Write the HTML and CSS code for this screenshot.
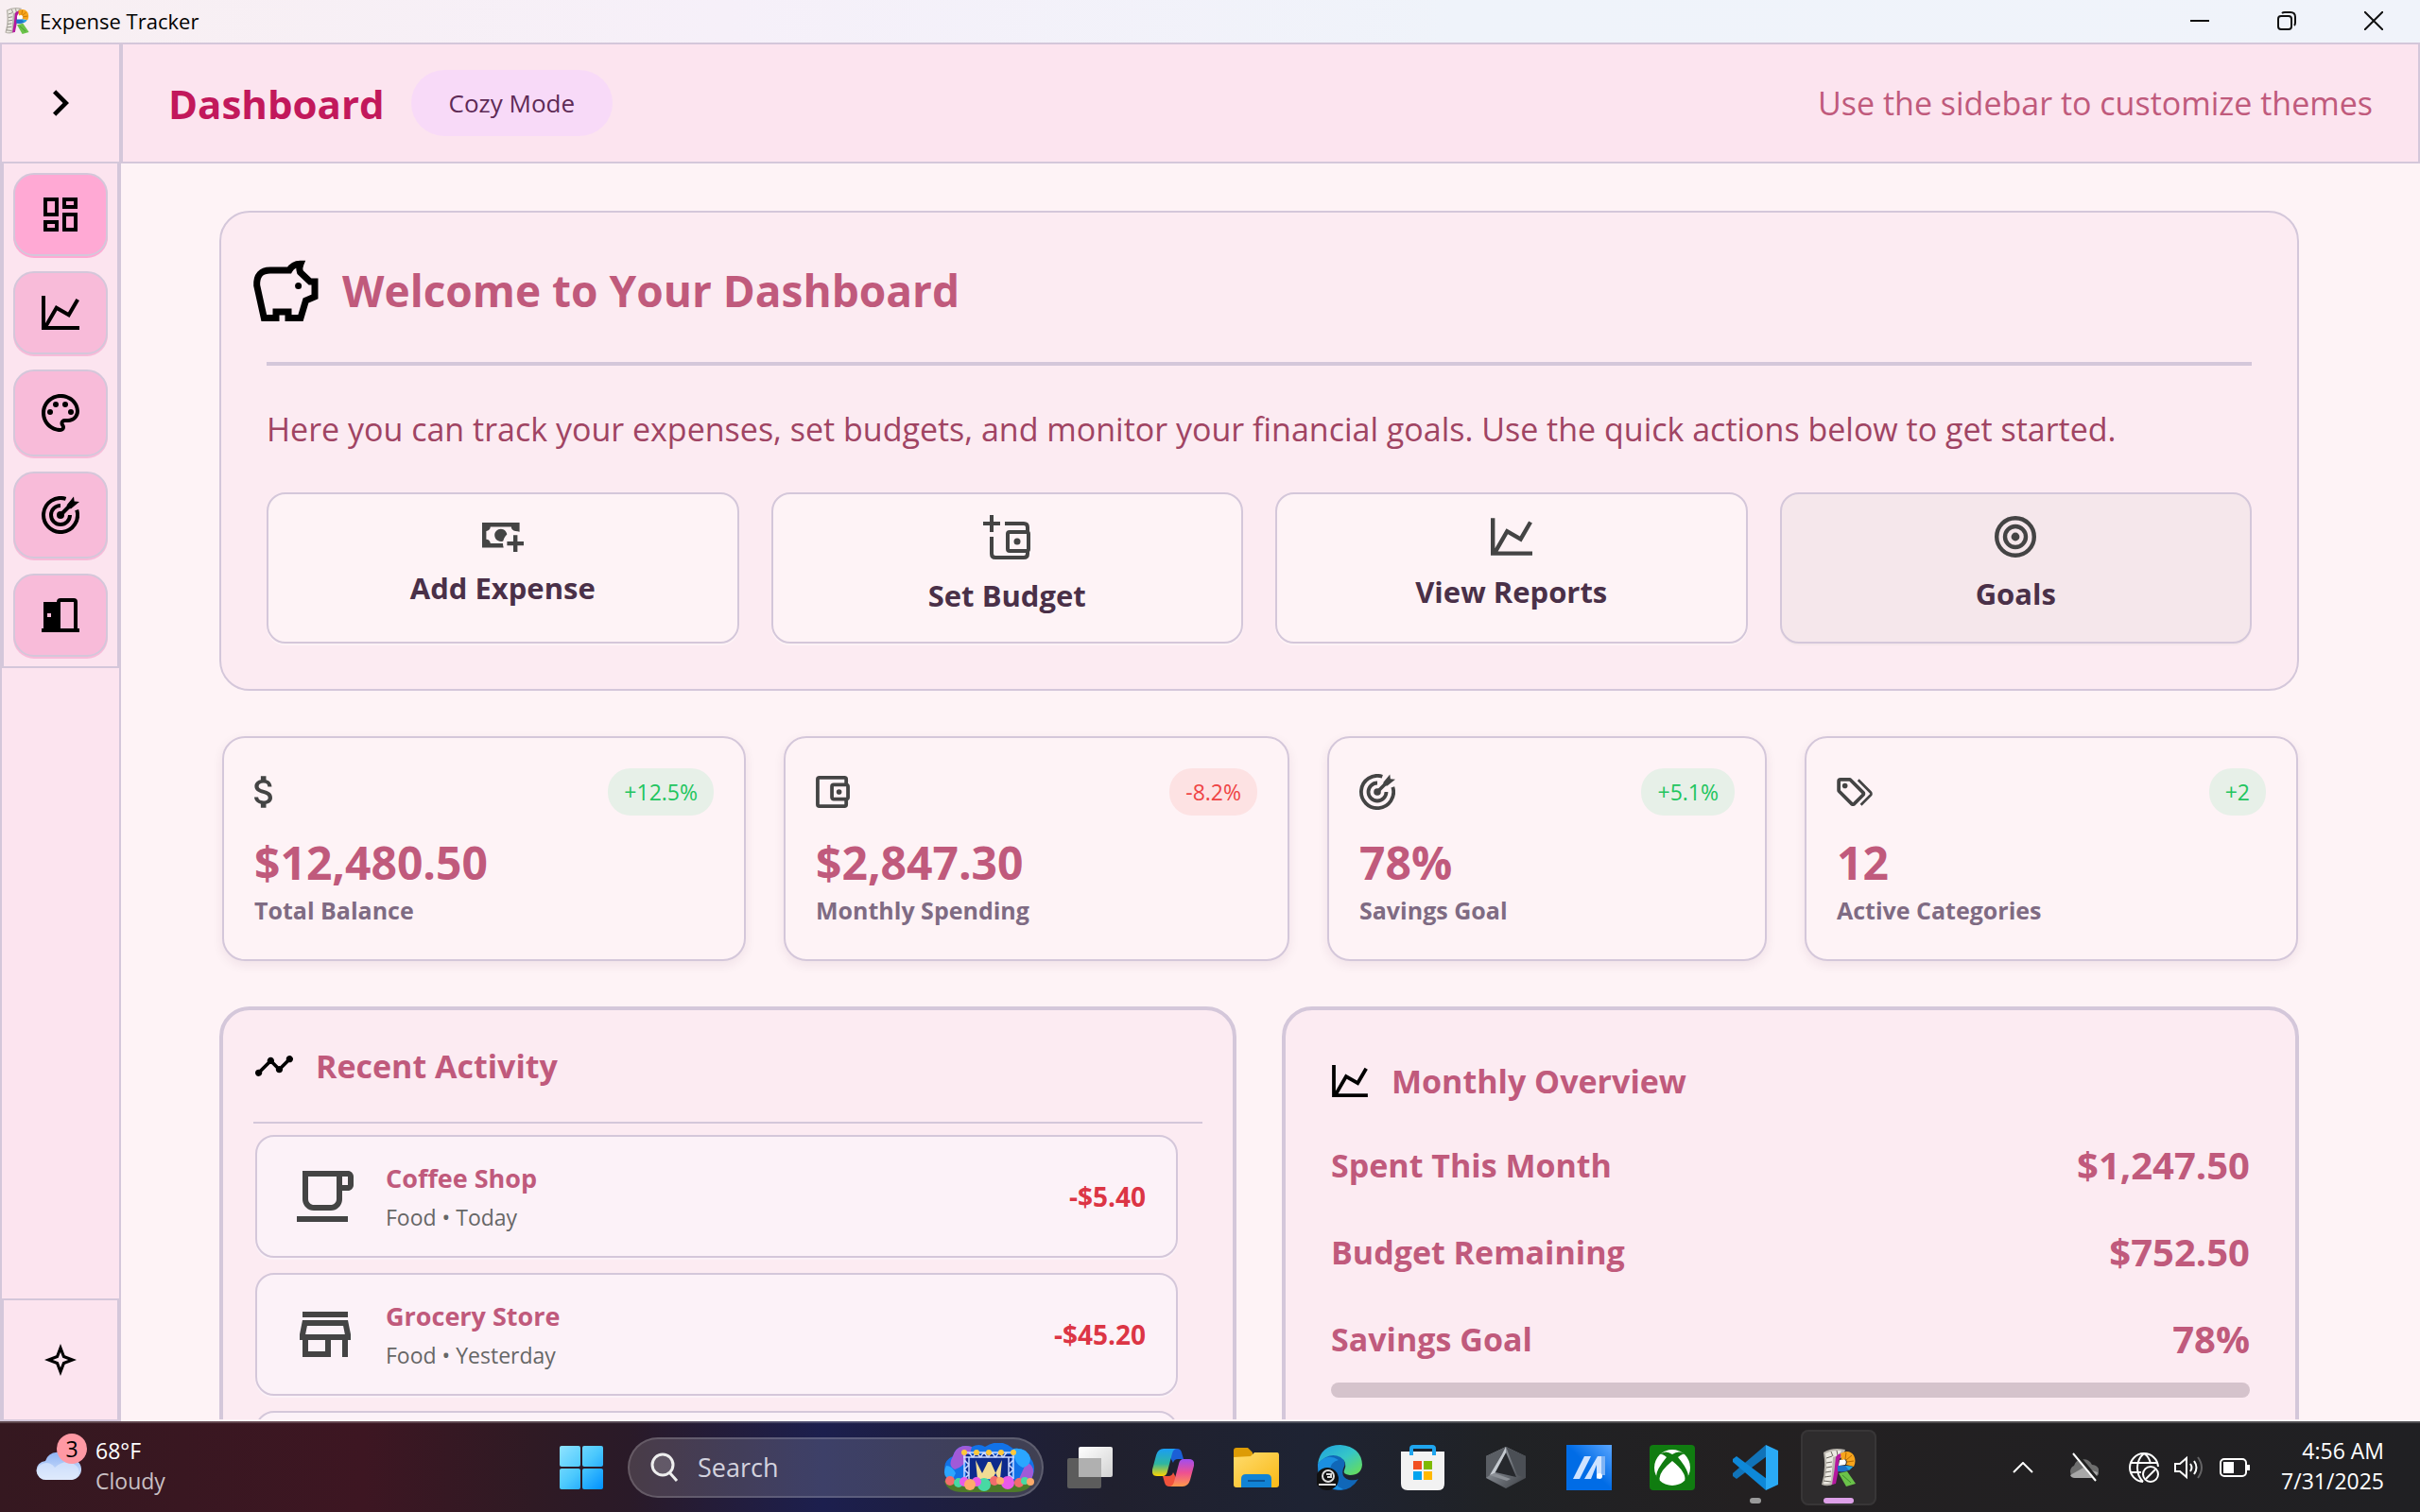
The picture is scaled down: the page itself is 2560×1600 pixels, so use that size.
FILE: index.html
```
<!DOCTYPE html>
<html lang="en">
<head>
<meta charset="utf-8">
<meta name="viewport" content="width=device-width, initial-scale=1">
<title>Expense Tracker</title>
<link rel="stylesheet" href="styles.css">
</head>
<body>
<svg class="defs" aria-hidden="true">
  <defs>
    <linearGradient id="g-win" gradientUnits="userSpaceOnUse" x1="0" y1="0" x2="46" y2="46"><stop offset="0" stop-color="#8fe3ff"/><stop offset=".5" stop-color="#4cc9fd"/><stop offset="1" stop-color="#0091ff"/></linearGradient>
    <linearGradient id="g-cloud" x1="0" y1="0" x2="0" y2="1"><stop offset="0" stop-color="#8fb4f4"/><stop offset="1" stop-color="#d8e6fc"/></linearGradient>
    <linearGradient id="g-copa" x1="0" y1="0" x2="0" y2="1"><stop offset="0" stop-color="#1a9df5"/><stop offset=".55" stop-color="#2fb6a0"/><stop offset="1" stop-color="#ffd400"/></linearGradient>
    <linearGradient id="g-copb" x1="0" y1="0" x2="0" y2="1"><stop offset="0" stop-color="#a04df0"/><stop offset=".5" stop-color="#ee5091"/><stop offset="1" stop-color="#ff9a4a"/></linearGradient>
    <linearGradient id="g-fold" x1="0" y1="0" x2="1" y2="1"><stop offset="0" stop-color="#ffdc6e"/><stop offset="1" stop-color="#f9b916"/></linearGradient>
    <linearGradient id="g-edge" x1="0" y1="0" x2="1" y2="1"><stop offset="0" stop-color="#1f9fe0"/><stop offset=".5" stop-color="#35c6c8"/><stop offset="1" stop-color="#6ee04a"/></linearGradient>
    <linearGradient id="g-hex" x1="0" y1="0" x2="1" y2="1"><stop offset="0" stop-color="#aab0b8"/><stop offset="1" stop-color="#3a3d42"/></linearGradient>
    <linearGradient id="g-asus" x1="0" y1="1" x2="1" y2="0"><stop offset=".5" stop-color="#006ce6"/><stop offset="1" stop-color="#5aa6ff"/></linearGradient>
    <linearGradient id="g-view" x1="0" y1="0" x2="1" y2="1"><stop offset="0" stop-color="#ffffff"/><stop offset="1" stop-color="#d2d2d2"/></linearGradient>
    <symbol id="i-chart" viewBox="2 3 20 18"><path d="M16 11.78l4.24-7.33 1.73 1-5.23 9.05-6.51-3.75L5.46 19H22v2H2V3h2v14.54L9.5 8z"/></symbol>
    <symbol id="i-target" viewBox="2 2 20 20">
      <path fill="none" stroke="currentColor" stroke-width="2" d="M14.8 3.45A9 9 0 1 0 20.6 9.3M12 7a5 5 0 1 0 5 5"/>
      <circle cx="12" cy="12" r="2"/><path fill="none" stroke="currentColor" stroke-width="2" d="M12 12l5-5"/>
      <path d="M15.4 6.6L19 2.2l.3 2.5 2.7.3-4.4 3.6h-2.2z"/>
    </symbol>
    <symbol id="i-wallet" viewBox="3 3 19 18"><path d="M5 3a2 2 0 0 0-2 2v14a2 2 0 0 0 2 2h14a2 2 0 0 0 2-2v-2.28c.59-.35 1-.98 1-1.72V9c0-.74-.41-1.37-1-1.72V5a2 2 0 0 0-2-2zm0 2h14v2h-6a2 2 0 0 0-2 2v6c0 1.1.9 2 2 2h6v2H5zm8 4h7v6h-7zm3 1.5a1.5 1.5 0 1 0 0 3 1.5 1.5 0 0 0 0-3z"/></symbol>
    <symbol id="i-logo" viewBox="0 0 38 40">
      <path fill="#b8b4ac" d="M3 4Q12-2 26 1l-3 8-6 2-3 26q-6 4-13 1Q6 22 3 4z"/>
      <path fill="#ece9e2" d="M5 5Q13 1 22 2l-3 5-6 2-2 27q-4 2-8 1Q8 22 5 5z"/>
      <path stroke="#6b675f" stroke-width="1" d="M6 10l6-2M6 15l6-1M6 20l6-1M5 25l6-1M4 30l7-1M3 34l8 1M11 3l2 5M17 2l1 5" fill="none"/>
      <path fill="#b5179e" d="M16 9q2-4 7-4l-4 8v9l-3 15-4 1q3-15 4-29z"/>
      <path fill="#ffffff" d="M20 12l5-1q3 2 1 6l-7 1z"/>
      <path fill="#f7a51c" d="M21 5q9-5 14 2 3 6 0 12l-8-2q2-4-1-6l-4 1z"/>
      <path stroke="#b96a00" fill="none" d="M27 4l-1 7M33 7l-6 5M35 13l-7 1"/>
      <path fill="#1f72c9" d="M18 18l9 0 7 1q-5 7-16 5z"/><path fill="#25a7e0" d="M26 18l8 1-4 4z"/>
      <path fill="#6bc24a" d="M19 26l9-2 9 13-10 3z"/><path fill="none" stroke="#3c8f2a" d="M23 28l9 8"/>
    </symbol>
  </defs>
</svg>

<header class="titlebar">
  <svg class="titlebar-logo"><use href="#i-logo"/></svg>
  <span class="titlebar-name">Expense Tracker</span>
  <div class="window-controls">
    <button type="button" aria-label="Minimize"><svg width="20" height="20" viewBox="0 0 20 20"><path d="M0 10h20"/></svg></button>
    <button type="button" aria-label="Restore"><svg width="20" height="20" viewBox="0 0 20 20"><rect x="1" y="5" width="14" height="14" rx="3"/><path d="M5 2q1-1 3-1h6q5 0 5 5v6q0 2-1 3"/></svg></button>
    <button type="button" aria-label="Close"><svg width="20" height="20" viewBox="0 0 20 20"><path d="M0 0l20 20M20 0L0 20"/></svg></button>
  </div>
</header>

<div class="app">
  <aside class="sidebar">
    <button type="button" class="sidebar-toggle" aria-label="Expand sidebar"><svg width="17" height="28" viewBox="8.59 6 7.41 12"><path d="M8.59 16.58L13.17 12 8.59 7.41 10 6l6 6-6 6z"/></svg></button>
    <nav class="sidebar-nav">
      <button type="button" class="nav-button active" aria-label="Dashboard"><svg width="40" height="36" viewBox="2 3 20 18"><path d="M19 5v2h-4V5h4M9 5v6H5V5h4m10 8v6h-4v-6h4M9 17v2H5v-2h4M21 3h-8v6h8V3zM11 3H3v10h8V3zm10 8h-8v10h8V11zm-10 4H3v6h8v-6z"/></svg></button>
      <button type="button" class="nav-button" aria-label="Reports"><svg width="40" height="36"><use href="#i-chart"/></svg></button>
      <button type="button" class="nav-button" aria-label="Themes"><svg width="40" height="40" viewBox="2 2 20 20"><path d="M12 22C6.49 22 2 17.51 2 12S6.49 2 12 2s10 4.04 10 9c0 3.31-2.69 6-6 6h-1.77c-.28 0-.5.22-.5.5 0 .12.05.23.13.33.41.47.64 1.06.64 1.67A2.5 2.5 0 0 1 12 22zm0-18c-4.41 0-8 3.59-8 8s3.59 8 8 8c.28 0 .5-.22.5-.5a.54.54 0 0 0-.14-.35c-.41-.46-.63-1.05-.63-1.65a2.5 2.5 0 0 1 2.5-2.5H16c2.21 0 4-1.79 4-4 0-3.86-3.59-7-8-7z"/><circle cx="6.5" cy="11.5" r="1.5"/><circle cx="9.5" cy="7.5" r="1.5"/><circle cx="14.5" cy="7.5" r="1.5"/><circle cx="17.5" cy="11.5" r="1.5"/></svg></button>
      <button type="button" class="nav-button" aria-label="Goals"><svg width="40" height="40"><use href="#i-target"/></svg></button>
      <button type="button" class="nav-button" aria-label="Exit"><svg width="40" height="36" viewBox="2 3 20 18"><path fill-rule="evenodd" d="M12 3h7a2 2 0 0 1 2 2v14h1v2H2v-2h1V5h7a2 2 0 0 1 2-2zm0 2v14h7V5zM5 11v2h2v-2z"/></svg></button>
    </nav>
    <button type="button" class="sidebar-footer" aria-label="Effects"><svg width="34" height="34" viewBox="1 1 22 22"><path d="M12 6.7l1.45 3.85L17.3 12l-3.85 1.45L12 17.3l-1.45-3.85L6.7 12l3.85-1.45L12 6.7M12 1L9 9l-8 3 8 3 3 8 3-8 8-3-8-3z"/></svg></button>
  </aside>

  <div class="content">
    <header class="topbar">
      <h1>Dashboard</h1>
      <button type="button" class="mode">Cozy Mode</button>
      <p class="hint">Use the sidebar to customize themes</p>
    </header>

    <main class="page">
      <section class="hero">
        <div class="hero-head">
          <svg width="72" height="72" viewBox="-2 -2 72 72"><path fill="none" stroke="#000" stroke-width="7" d="M11.3 61.5L3.7 27Q3 11 18 11H38Q42 4 50 4.2 48 9 49.5 13L60 23H65V39L55.5 43 50 61.5H37V55H24V61.5Z"/><circle cx="47.6" cy="27.5" r="3.5"/></svg>
          <h2>Welcome to Your Dashboard</h2>
        </div>
        <p class="hero-text">Here you can track your expenses, set budgets, and monitor your financial goals. Use the quick actions below to get started.</p>
        <div class="actions">
          <button type="button" class="action"><svg width="44" height="31" viewBox="3 6 20 14"><path d="M15 15v2h3v3h2v-3h3v-2h-3v-3h-2v3M14.97 11.61C14.85 10.28 13.59 8.97 12 9c-1.7.03-3 1.3-3 3s1.3 2.94 3 3c.38 0 .77-.08 1.14-.23.27-1.1.72-2.14 1.83-3.16M13 16H7c0-1.1-.9-2-2-2v-4c1.1 0 2-.9 2-2h10c0 1.1.9 2 2 2v.06c.67 0 1.34.12 2 .34V6H3v12h10.32c-.22-.67-.32-1.34-.32-2z"/></svg>Add Expense</button>
          <button type="button" class="action"><svg width="50" height="47" viewBox="0 0 50 47"><path fill="none" stroke="currentColor" stroke-width="4" d="M9 0v18M0 9h18M9 23v18q0 4 4 4h30q4 0 4-4v-3M23 9h20q4 0 4 4v4M28 18h18q2 0 2 2v16q0 2-2 2H28q-2 0-2-2V20q0-2 2-2z"/><circle cx="36" cy="28" r="3.5"/></svg>Set Budget</button>
          <button type="button" class="action"><svg width="44" height="40"><use href="#i-chart"/></svg>View Reports</button>
          <button type="button" class="action hovered"><svg width="44" height="44" viewBox="0 0 44 44"><g fill="none" stroke="currentColor" stroke-width="4.4"><circle cx="22" cy="22" r="19.8"/><circle cx="22" cy="22" r="11"/></g><circle cx="22" cy="22" r="4.4"/></svg>Goals</button>
        </div>
      </section>

      <section class="stats" aria-label="Summary">
        <article class="stat">
          <div class="stat-top"><svg width="19" height="34" viewBox="6.3 3 10.2 18"><path d="M11.8 10.9c-2.27-.59-3-1.2-3-2.15 0-1.09 1.01-1.85 2.7-1.85 1.78 0 2.44.85 2.5 2.1h2.21c-.07-1.72-1.12-3.3-3.21-3.81V3h-3v2.16c-1.94.42-3.5 1.68-3.5 3.61 0 2.31 1.91 3.46 4.7 4.13 2.5.6 3 1.48 3 2.41 0 .69-.49 1.79-2.7 1.79-2.06 0-2.87-.92-2.98-2.1h-2.2c.12 2.19 1.76 3.42 3.68 3.83V21h3v-2.15c1.95-.37 3.5-1.5 3.5-3.55 0-2.84-2.43-3.81-4.7-4.4z"/></svg><span class="pill up">+12.5%</span></div>
          <strong class="stat-value">$12,480.50</strong><span class="stat-label">Total Balance</span>
        </article>
        <article class="stat">
          <div class="stat-top"><svg width="36" height="34"><use href="#i-wallet"/></svg><span class="pill down">-8.2%</span></div>
          <strong class="stat-value">$2,847.30</strong><span class="stat-label">Monthly Spending</span>
        </article>
        <article class="stat">
          <div class="stat-top"><svg width="38" height="38"><use href="#i-target"/></svg><span class="pill up">+5.1%</span></div>
          <strong class="stat-value">78%</strong><span class="stat-label">Savings Goal</span>
        </article>
        <article class="stat">
          <div class="stat-top"><svg width="38" height="30" viewBox="2 4 20 16"><path d="M6.5 10a1.5 1.5 0 1 0 0-3 1.5 1.5 0 0 0 0 3M9 6l7 7-5 5-7-7V6h5m0-2H4a2 2 0 0 0-2 2v5c0 .6.2 1.1.6 1.4l7 7c.3.4.8.6 1.4.6s1.1-.2 1.4-.6l5-5c.4-.4.6-.9.6-1.4 0-.6-.2-1.1-.6-1.4l-7-7C10.1 4.2 9.6 4 9 4m4.5 1.7l1-1 6.9 6.9c.4.4.6.9.6 1.4s-.2 1.1-.6 1.4L16 19.8l-1-1 5.7-5.8z"/></svg><span class="pill up">+2</span></div>
          <strong class="stat-value">12</strong><span class="stat-label">Active Categories</span>
        </article>
      </section>

      <div class="panels">
        <section class="panel recent">
          <div class="panel-head"><svg width="40" height="22" viewBox="1 6 22 12"><path d="M3 14l.5.07L8.07 9.5a2 2 0 1 1 3.86 0l2.57 2.57L15 12l.5.07L19.07 8.5A2 2 0 1 1 20.5 9.93L16.93 13.5A2 2 0 1 1 13.07 13.5L10.5 10.93h-1L4.93 15.5A2 2 0 1 1 3 14z"/></svg><h3>Recent Activity</h3></div>
          <ul class="activity">
            <li><svg width="72" height="72" viewBox="0 0 24 24"><path d="M16 5v8c0 1.1-.9 2-2 2H8c-1.1 0-2-.9-2-2V5h10m4-2H4v10c0 2.21 1.79 4 4 4h6c2.21 0 4-1.79 4-4v-3h2c1.11 0 2-.89 2-2V5c0-1.11-.89-2-2-2zm-2 5V5h2v3h-2zm2 11H2v2h18v-2z"/></svg><div class="activity-text"><strong>Coffee Shop</strong><span>Food • Today</span></div><b class="amount">-$5.40</b></li>
            <li><svg width="72" height="72" viewBox="0 0 24 24"><path d="M18.36 9l.6 3H5.04l.6-3h12.72M20 4H4v2h16V4zm0 3H4l-1 5v2h1v6h10v-6h4v6h2v-6h1v-2l-1-5zM6 18v-4h6v4H6z"/></svg><div class="activity-text"><strong>Grocery Store</strong><span>Food • Yesterday</span></div><b class="amount">-$45.20</b></li>
            <li></li>
          </ul>
        </section>
        <section class="panel overview">
          <div class="panel-head"><svg width="40" height="34"><use href="#i-chart"/></svg><h3>Monthly Overview</h3></div>
          <dl>
            <div><dt>Spent This Month</dt><dd>$1,247.50</dd></div>
            <div><dt>Budget Remaining</dt><dd>$752.50</dd></div>
            <div><dt>Savings Goal</dt><dd>78%</dd></div>
          </dl>
          <div class="track"></div>
        </section>
      </div>
    </main>
  </div>
</div>

<footer class="taskbar">
  <button type="button" class="weather">
    <span class="weather-icon"><svg width="48" height="32" viewBox="0 0 48 32"><path fill="url(#g-cloud)" d="M11 31a10 10 0 0 1-1-20A14 13 0 0 1 36 9a11 11 0 0 1 2 22z"/><path fill="#e2ecfd" opacity=".6" d="M11 31a10 9 0 1 1 9-13q8-8 18-5 10 5 7 12-3 6-9 6z"/></svg><span class="badge">3</span></span>
    <span class="weather-text"><span>68°F</span><span class="dim">Cloudy</span></span>
  </button>

  <div class="tasks">
    <button type="button" class="task" aria-label="Start"><svg width="46" height="46" viewBox="0 0 46 46"><g fill="url(#g-win)"><rect width="22" height="22" rx="2"/><rect x="24" width="22" height="22" rx="2"/><rect y="24" width="22" height="22" rx="2"/><rect x="24" y="24" width="22" height="22" rx="2"/></g></svg></button>
    <label class="search">
      <svg width="30" height="32" viewBox="0 0 30 32"><g fill="rgba(255,255,255,.15)" stroke="#eeeeee" stroke-width="3"><circle cx="13" cy="13" r="11"/><path d="M20.5 21.5l7.5 8.5"/></g></svg>
      <input type="text" placeholder="Search" aria-label="Search">
      <svg width="96" height="52" viewBox="0 0 96 52">
        <path fill="#1272e8" d="M4 38Q-4 20 10 14 14 0 30 4q8-4 14 0Q60-6 74 6q14-2 18 10 8 10 0 24z"/><path fill="#a05ad8" d="M10 14Q14 0 30 4q-4 20-18 24-8-4-2-14zM88 20q12 6 4 20l-12-2z"/><path fill="#2ba6ff" d="M74 6q14-2 18 10 0 8-8 10-10-4-10-20zM3 24q6 0 10 8l-4 8q-12-4-6-16z"/>
        <path fill="#0d2a8c" d="M24 12h48v26H24z"/><path fill="#f2dc94" d="M34 18l10 20h-8zM62 18L52 38h8zM47 20h3l8 18H38z"/>
        <path fill="none" stroke="#c9d8ff" stroke-width="1.5" d="M21 10h54M21 15h54M22 10v28M27 15v23M69 15v23M74 10v28M22 18l5 5-5 5 5 5-5 5M74 18l-5 5 5 5-5 5 5 5M27 10l4 5 4-5 4 5 4-5 4 5 4-5 4 5 4-5 4 5 4-5"/>
        <g fill="#ffc83a"><circle cx="22" cy="10" r="3"/><circle cx="35" cy="10" r="3"/><circle cx="48" cy="10" r="3"/><circle cx="61" cy="10" r="3"/><circle cx="74" cy="10" r="3"/></g>
        <path fill="#4d7a2a" d="M1 40h94q-4 12-20 12H20Q4 52 1 40z"/>
        <g fill="#f16d6d"><circle cx="7" cy="40" r="5"/><circle cx="54" cy="40" r="5"/><circle cx="80" cy="42" r="5"/></g><g fill="#48d9a4"><circle cx="16" cy="42" r="5"/><circle cx="43" cy="44" r="7"/><circle cx="86" cy="40" r="4"/></g><g fill="#e95be8"><circle cx="22" cy="41" r="5"/><circle cx="68" cy="42" r="7"/><circle cx="35" cy="41" r="5"/></g><g fill="#ffab6b"><circle cx="28" cy="44" r="6"/><circle cx="92" cy="41" r="4"/><circle cx="60" cy="40" r="4"/></g>
      </svg>
    </label>
    <button type="button" class="task" aria-label="Task view"><svg width="48" height="44" viewBox="0 0 48 44"><rect y="12" width="36" height="32" rx="2" fill="#5c5c5c"/><rect x="12" width="36" height="32" rx="2" fill="url(#g-view)"/><path fill="#b0b0b0" d="M12 12h24v20H12z"/></svg></button>
    <button type="button" class="task" aria-label="Copilot"><svg width="44" height="40" viewBox="0 0 44 40"><path fill="#1b5fd6" d="M14 0h12q4 0 5 4l2 7h-6q-4 0-5 4z"/><path fill="#f0533c" d="M30 40H18q-4 0-5-4l-2-7h6q4 0 5-4z"/><path fill="url(#g-copa)" d="M12 0h13q-3 1-4 5l-5 19q-1 5-5 5H5q-6 0-5-7L4 7q2-7 8-7z"/><path fill="url(#g-copb)" d="M32 40H19q3-1 4-5l5-19q1-5 5-5h6q6 0 5 7l-4 15q-2 7-8 7z"/></svg></button>
    <button type="button" class="task" aria-label="File Explorer"><svg width="48" height="42" viewBox="0 0 48 42"><path fill="#dd9b05" d="M0 3q0-3 3-3h12l5 5v9H0z"/><path fill="url(#g-fold)" d="M0 10l18-1 4-4h24q2 0 2 3v31q0 3-3 3H3q-3 0-3-3z"/><path fill="#1183d4" d="M8 42v-9q0-5 5-5h22q5 0 5 5v9z"/><path stroke="#0a5596" stroke-width="2" d="M15 35h18"/></svg></button>
    <button type="button" class="task" aria-label="Edge"><svg width="48" height="48" viewBox="0 0 48 48"><path fill="#1067b8" d="M2 18C8 8 20 8 27 14q5 4 1 11-3 9 6 12 7 1 10-1-8 13-22 12Q0 45 2 18z"/><path fill="url(#g-edge)" d="M1 20Q4 0 25 0q22 2 23 21-1 11-13 11-8-1-6-5 4-9-4-14-12-6-24 7z"/><path fill="#1b8fe0" d="M1 20q10-12 22-4-10 2-9 14 2 12 14 17Q0 50 1 20z"/><circle cx="11" cy="36" r="12" fill="#111"/><circle cx="12" cy="33" r="6" fill="none" stroke="#ddd" stroke-width="2"/><path fill="none" stroke="#ddd" stroke-width="2" d="M10 31h5v3h-4M2 42h18"/></svg></button>
    <button type="button" class="task" aria-label="Microsoft Store"><svg width="46" height="48" viewBox="0 0 46 48"><path fill="#f2f2f2" d="M0 7h46v34q0 7-7 7H7q-7 0-7-7z"/><path fill="none" stroke="#1fa5ee" stroke-width="4" d="M11 11V4q0-2 2-2h20q2 0 2 2v7"/><path fill="#f25022" d="M13 17h9v9h-9z"/><path fill="#7fba00" d="M24 17h9v9h-9z"/><path fill="#00a4ef" d="M13 28h9v9h-9z"/><path fill="#ffb900" d="M24 28h9v9h-9z"/></svg></button>
    <button type="button" class="task" aria-label="Armoury Crate"><svg width="42" height="44" viewBox="0 0 42 44"><path fill="url(#g-hex)" d="M21 0l21 10v23L21 44 0 33V10z"/><path fill="#5a5e64" d="M0 10l21-10-4 8L4 30l-4 3z"/><path fill="#26282c" d="M21 6l11 26-22-5z"/><path fill="#c5cad0" d="M21 0l-4 8L4 30l5-2L21 6z"/><path fill="#4b4f55" d="M21 0l12 30 9 3V10z"/><path fill="#8d9197" d="M4 30l18 6 4-2-17-6z"/></svg></button>
    <button type="button" class="task" aria-label="MyASUS"><svg width="48" height="48" viewBox="0 0 48 48"><path fill="url(#g-asus)" d="M0 0h48v48H0z"/><path fill="#cfe3ff" d="M19 12h7L14 36H7zM33 12h4v20l-5 4V21l-6 15h-7z"/><path fill="#7fb4f5" d="M37 12h4v20h-4z"/><circle cx="35" cy="33" r="3" fill="#fff"/></svg></button>
    <button type="button" class="task" aria-label="Xbox"><svg width="48" height="48" viewBox="0 0 48 48"><rect width="48" height="48" rx="4" fill="#107c10"/><circle cx="24" cy="24" r="19" fill="#fff"/><path fill="#107c10" d="M24 17Q8 30 11 38l-3-2Q4 30 18 13q-5-4-7-3 6-5 13 0 7-5 13 0-2-1-7 3 14 17 10 23l-3 2q3-8-13-21z"/></svg></button>
    <button type="button" class="task open" aria-label="Visual Studio Code"><svg width="48" height="48" viewBox="0 0 48 48"><path fill="#1173b8" d="M4 36l-4-3v-3L35 0l1 12z"/><path fill="#0e88d8" d="M4 12l-4 3v3l35 30 1-12z"/><path fill="#2aaaf5" d="M35 0l13 6v36l-13 6z"/></svg></button>
    <button type="button" class="task open current" aria-label="Expense Tracker"><svg width="38" height="40"><use href="#i-logo"/></svg></button>
  </div>

  <div class="tray">
    <button type="button" class="tray-more" aria-label="Show hidden icons"><svg width="22" height="12" viewBox="0 0 22 12"><path d="M1 11L11 1l10 10"/></svg></button>
    <button type="button" class="tray-cloud" aria-label="OneDrive"><svg width="32" height="32" viewBox="0 0 32 32"><path fill="#6e6e6e" stroke="none" d="M7 27a7 7 0 0 1-1-13 10 9 0 0 1 19-1 7 7 0 0 1 1 14z"/><path fill="#a8a8a8" stroke="none" d="M2 24l14-8 15 5q-1 6-6 6H7q-4 0-5-3z"/><path stroke="#222222" stroke-width="5" d="M7 1l24 29"/><path d="M5 1l24 29"/></svg></button>
    <button type="button" class="tray-status" aria-label="Network, volume and battery">
      <svg width="32" height="32" viewBox="0 0 32 32"><path d="M15 31A15 15 0 1 1 31 15M1 11h29M1 21h12M16 1q-7 6-7 15t6 15M16 1q6 4 7 11"/><circle cx="23" cy="23" r="8"/><path d="M18 28l10-10"/></svg>
      <svg width="32" height="28" viewBox="0 0 32 28"><path d="M1 10v8h5l7 6V4l-7 6zM17 10q3 4 0 8M21 7q5 7 0 14"/><path opacity=".3" d="M25 3q8 11 0 22"/></svg>
      <svg width="32" height="20" viewBox="0 0 32 20"><rect x="1" y="1" width="27" height="18" rx="4"/><path fill="#fff" stroke="none" d="M4 4h11v12H4zM29 7h3v6h-3z"/></svg>
    </button>
    <button type="button" class="clock"><span>4:56 AM</span><span>7/31/2025</span></button>
  </div>
</footer>
</body>
</html>
```
FILE: styles.css
```
:root {
  --line: #d4c7da;
  --bar: #fce4ef;
  --page: #fef3f6;
  --panel: #fcebf2;
  --rose: #c05a7c;
  --icon: #444444;
}

* { box-sizing: border-box; }

body {
  margin: 0;
  height: 100vh;
  display: flex;
  flex-direction: column;
  overflow: hidden;
  font-family: "Open Sans", "Noto Sans", sans-serif;
  color: #000000;
  background: var(--page);
}

h1, h2, h3, p, ul, dl, dd { margin: 0; padding: 0; }
ul { list-style: none; }
button { font: inherit; color: inherit; background: none; border: 0; padding: 0; margin: 0; }
svg { display: block; flex: none; fill: currentColor; }
.defs { position: absolute; width: 0; height: 0; }

/* Window title bar */
.titlebar {
  flex: none;
  height: 45px;
  display: flex;
  align-items: center;
  gap: 10px;
  padding: 0 3px 2px 4px;
  font-size: 22px;
  background: linear-gradient(90deg, #f8eff2, #f6f0f9 30%, #eff3fa 60%, #f0f3fa);
}
.titlebar-logo { width: 28px; height: 28px; }
.window-controls { margin-left: auto; display: flex; }
.window-controls button { width: 92px; height: 42px; display: grid; place-items: center; }
.window-controls svg { fill: none; stroke: #111111; stroke-width: 2; }

/* Application frame */
.app { flex: 1; min-height: 0; display: flex; }

.sidebar {
  flex: none;
  width: 128px;
  display: flex;
  flex-direction: column;
  background: var(--bar);
  border: 2px solid var(--line);
}
.sidebar-toggle { height: 124px; display: grid; place-items: center; }
.sidebar-nav {
  display: flex;
  flex-direction: column;
  gap: 16px;
  padding: 10px;
  border: 2px solid var(--line);
}
.nav-button {
  display: grid;
  place-items: center;
  padding: 24px 0;
  background: #f8bbd9;
  border: 2px solid var(--line);
  border-radius: 22px;
  box-shadow: 0 2px 0 #f8bbd9;
}
.nav-button.active { background: #ffa9d4; box-shadow: 0 2px 0 #ffa9d4; }
.sidebar-footer {
  margin-top: auto;
  height: 128px;
  display: grid;
  place-items: center;
  border: 2px solid var(--line);
  border-bottom: 0;
}

.content { flex: 1; min-width: 0; display: flex; flex-direction: column; }

.topbar {
  flex: none;
  height: 128px;
  display: flex;
  align-items: center;
  padding: 0 48px;
  background: var(--bar);
  border: 2px solid var(--line);
}
.topbar h1 { font-size: 42px; color: #c2185b; }
.mode {
  margin-left: 28px;
  height: 70px;
  padding: 0 40px;
  border-radius: 35px;
  font-size: 26px;
  color: #5e2a56;
  background: #f8daf8;
}
.hint { margin-left: auto; font-size: 34px; color: var(--rose); }

.page {
  flex: 1;
  min-height: 0;
  overflow: hidden;
  display: flex;
  flex-direction: column;
  gap: 48px;
  padding: 50px 128px 0 104px;
  border-bottom: 2px solid var(--page);
}
.page > * { flex: none; }

/* Welcome card */
.hero {
  padding: 48px;
  background: var(--panel);
  border: 2px solid var(--line);
  border-radius: 32px;
}
.hero-head {
  display: flex;
  align-items: center;
  gap: 24px;
  padding-bottom: 38px;
  border-bottom: 4px solid var(--line);
}
.hero-head svg { margin-left: -16px; }
.hero-head h2 { padding-bottom: 4px; font-size: 46px; line-height: 64px; color: var(--rose); }
.hero-text { margin: 40px 0; font-size: 34px; line-height: 54px; color: #a04463; }
.actions { display: grid; grid-template-columns: repeat(4, 1fr); gap: 34px; }
.action {
  height: 160px;
  display: flex;
  flex-direction: column;
  align-items: center;
  justify-content: center;
  gap: 14px;
  padding-bottom: 4px;
  background: var(--page);
  border: 2px solid var(--line);
  border-radius: 20px;
  box-shadow: 0 2px 0 var(--page);
  font-size: 31px;
  font-weight: 700;
  line-height: 48px;
  color: #4a3048;
}
.action svg { color: var(--icon); }
.action.hovered { background: #f5e7eb; box-shadow: 0 2px 0 #f5e7eb; }

/* Summary figures */
.stats {
  display: grid;
  grid-template-columns: 554fr 535fr 465fr 522fr;
  gap: 40px;
  margin: 0 1px 0 3px;
}
.stat {
  display: flex;
  flex-direction: column;
  padding: 32px;
  background: var(--page);
  border: 2px solid var(--line);
  border-radius: 24px;
  box-shadow: 0 4px 12px rgba(80, 30, 60, .08);
}
.stat-top { display: flex; align-items: center; justify-content: space-between; color: var(--icon); }
.pill { padding: 0 17px; border-radius: 24px; font-size: 23px; line-height: 50px; }
.pill.up { color: #22c55e; background: #e7f0e8; }
.pill.down { color: #ef4444; background: #fde2e3; }
.stat-value { margin-top: 20px; font-size: 48px; line-height: 60px; color: var(--rose); }
.stat-label { font-size: 25px; font-weight: 700; line-height: 40px; color: #7f6b83; }

/* Lower panels */
.panels { display: grid; grid-template-columns: 1fr 1fr; gap: 48px; }
.panel {
  min-height: 560px;
  background: var(--panel);
  border: 4px solid var(--line);
  border-radius: 32px;
}
.panel-head { display: flex; align-items: center; gap: 24px; }
.panel h3 { font-size: 34px; line-height: 54px; color: var(--rose); }

.recent { padding: 32px; }
.recent .panel-head { padding: 0 2px 32px; border-bottom: 2px solid var(--line); }
.activity { display: flex; flex-direction: column; gap: 16px; margin: 12px 26px 0 2px; }
.activity li {
  height: 130px;
  display: flex;
  align-items: center;
  gap: 28px;
  padding: 0 32px 0 36px;
  color: var(--icon);
  background: #fcf2f8;
  border: 2px solid var(--line);
  border-radius: 20px;
  box-shadow: 0 2px 0 #fcf2f8;
}
.activity-text { flex: 1; display: flex; flex-direction: column; }
.activity-text strong { font-size: 27px; line-height: 44px; color: var(--rose); }
.activity-text span { font-size: 23px; line-height: 38px; color: #666666; }
.amount { font-size: 28px; color: #dc3545; }

.overview { padding: 48px; }
.overview .panel-head { margin-bottom: 32px; }
.overview dl { display: flex; flex-direction: column; gap: 32px; }
.overview dl div { display: flex; justify-content: space-between; line-height: 60px; font-weight: 700; color: var(--rose); }
.overview dt { font-size: 34px; }
.overview dd { font-size: 40px; }
.track { margin-top: 16px; height: 16px; border-radius: 8px; background: #d5c3cc; }

/* System taskbar */
.taskbar {
  flex: none;
  height: 96px;
  display: grid;
  grid-template-columns: 1fr auto 1fr;
  align-items: center;
  padding: 0 38px;
  color: #ffffff;
  border-top: 2px solid rgba(255, 255, 255, .2);
  background: linear-gradient(90deg, #351820, #3d1622 15%, #2f1a24 22%, #2a1a28 26%, #1c1f4e 34%, #1d1e42 38%, #20202e 46%, #1e2333 54%, #202225 62%, #232021 72%, #202023);
  background-origin: border-box;
}
.weather { display: flex; align-items: center; gap: 15px; font-size: 23px; line-height: 32px; text-align: left; }
.weather-icon { position: relative; width: 48px; }
.badge {
  position: absolute;
  left: 22px;
  top: -18px;
  width: 32px;
  height: 32px;
  border-radius: 50%;
  text-align: center;
  color: #000000;
  background: #ff99a4;
}
.weather-icon, .weather-text, .clock { padding-bottom: 4px; }
.weather-text, .clock { display: flex; flex-direction: column; }
.dim { color: #c9c0c4; }

.tasks { display: flex; align-items: center; gap: 8px; }
.task { position: relative; width: 80px; height: 80px; display: grid; place-items: center; border-radius: 8px; }
.task.current { background: #2e2c2d; box-shadow: inset 0 0 0 2px #383637; }
.task.open::after {
  content: "";
  position: absolute;
  left: 34px;
  bottom: 2px;
  width: 12px;
  height: 6px;
  border-radius: 3px;
  background: #9a9a9a;
}
.task.current::after { left: 24px; width: 32px; background: #dda0e8; }
.search {
  width: 440px;
  height: 64px;
  margin: 0 1px;
  display: flex;
  align-items: center;
  padding: 0 8px 0 22px;
  border: 2px solid rgba(255, 255, 255, .16);
  border-radius: 32px;
  background: rgba(255, 255, 255, .15);
}
.search input {
  flex: 1;
  min-width: 0;
  margin-left: 20px;
  padding: 0 0 2px;
  border: 0;
  outline: 0;
  background: none;
  font: inherit;
  font-size: 27px;
  color: #ffffff;
}
.search input::placeholder { color: #d3d2de; opacity: 1; }

.tray { display: flex; align-items: center; justify-content: flex-end; font-size: 23px; line-height: 32px; }
.tray svg { fill: none; stroke: #ffffff; stroke-width: 2; }
.tray-cloud { margin: 0 32px 0 37px; }
.tray-status { display: flex; align-items: center; gap: 16px; margin-right: 33px; }
.clock { text-align: right; }
```
